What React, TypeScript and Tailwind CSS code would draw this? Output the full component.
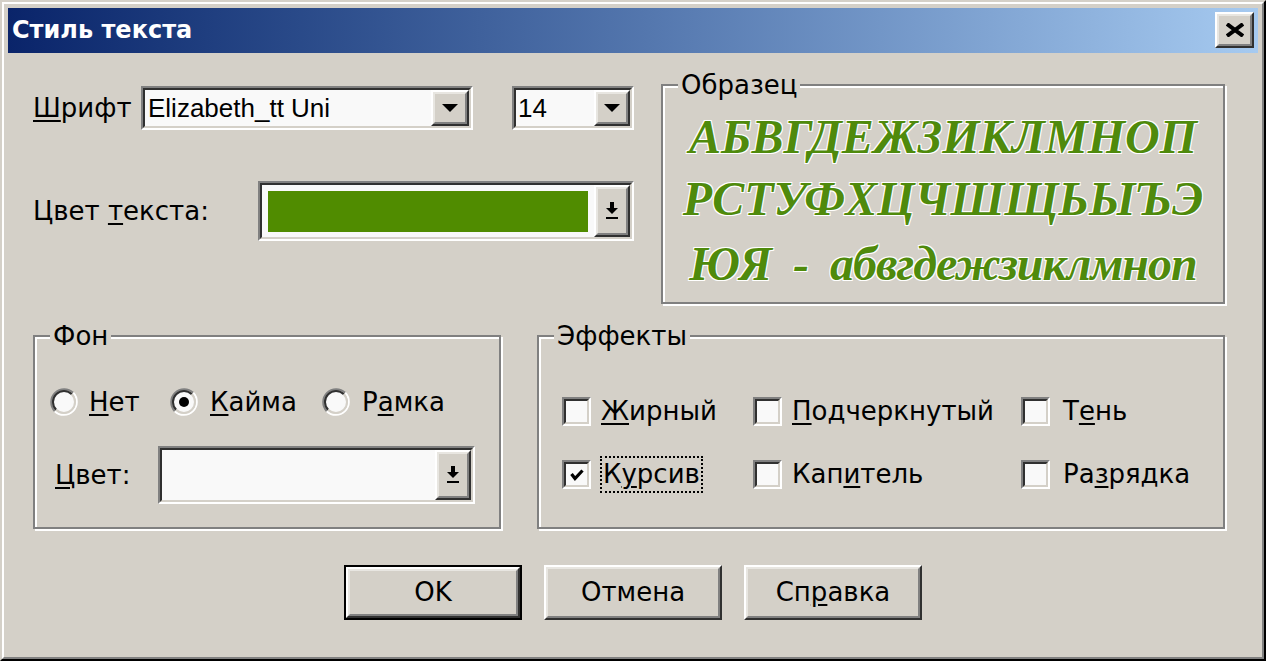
import type { ReactNode } from "react";

const sampleFont = "font-['Liberation_Serif',serif]";

function Key({ children }: { children: ReactNode }) {
  return <span className="underline decoration-2 underline-offset-[3px]">{children}</span>;
}

function Raised({ className = "", children }: { className?: string; children?: ReactNode }) {
  return (
    <div className={`border-2 border-t-white border-l-white border-r-[#303030] border-b-[#303030] ${className}`}>
      <div className="h-full w-full border-2 border-t-[#e8e6e1] border-l-[#e8e6e1] border-r-[#808080] border-b-[#808080] bg-[#d4d0c8] flex items-center justify-center">
        {children}
      </div>
    </div>
  );
}

function Sunken({ className = "", inner = "", children }: { className?: string; inner?: string; children?: ReactNode }) {
  return (
    <div className={`border-2 border-t-[#808080] border-l-[#808080] border-r-white border-b-white ${className}`}>
      <div className={`h-full w-full border-2 border-t-[#303030] border-l-[#303030] border-r-[#d4d0c8] border-b-[#d4d0c8] flex ${inner}`}>
        {children}
      </div>
    </div>
  );
}

function Group({ title, className = "", children }: { title: string; className?: string; children?: ReactNode }) {
  return (
    <fieldset className={`border-2 border-[#808080] shadow-[2px_2px_0_#fff,inset_2px_2px_0_#fff] ${className}`}>
      <legend className="ml-[15px] px-[3px] bg-[#d4d0c8] leading-[26px]">{title}</legend>
      {children}
    </fieldset>
  );
}

const Triangle = () => (
  <svg width="16" height="8" viewBox="0 0 16 8">
    <polygon points="0,0 16,0 8,8" fill="#000" />
  </svg>
);

const DownBar = () => (
  <svg width="12" height="18" viewBox="0 0 12 18">
    <rect x="4" y="0" width="4" height="6" fill="#000" />
    <polygon points="0,6 12,6 6,12" fill="#000" />
    <rect x="0" y="15" width="12" height="2" fill="#000" />
  </svg>
);

function Radio({ on = false }: { on?: boolean }) {
  return (
    <svg width="28" height="28" viewBox="0 0 28 28" className="shrink-0">
      <circle cx="14" cy="14" r="11" fill="#f9f9f9" />
      <path d="M4.81 23.19 A13 13 0 0 1 23.19 4.81" fill="none" stroke="#808080" strokeWidth="2" />
      <path d="M23.19 4.81 A13 13 0 0 1 4.81 23.19" fill="none" stroke="#fff" strokeWidth="2" />
      <path d="M6.22 21.78 A11 11 0 0 1 21.78 6.22" fill="none" stroke="#303030" strokeWidth="2" />
      <path d="M21.78 6.22 A11 11 0 0 1 6.22 21.78" fill="none" stroke="#d4d0c8" strokeWidth="2" />
      {on && <circle cx="14" cy="14" r="5" fill="#000" />}
    </svg>
  );
}

function Check({ on = false }: { on?: boolean }) {
  return (
    <Sunken className="w-[29px] h-[29px] shrink-0" inner="bg-[#f9f9f9] items-center justify-center">
      {on && (
        <svg width="14" height="12" viewBox="0 0 14 12">
          <polyline points="1.5,5 5,9.5 12.5,1.5" fill="none" stroke="#000" strokeWidth="3.2" />
        </svg>
      )}
    </Sunken>
  );
}

function Btn({ children, def = false }: { children: ReactNode; def?: boolean }) {
  if (def) {
    return (
      <div className="w-[178px] h-[55px] border-2 border-black">
        <Raised className="w-full h-full">{children}</Raised>
      </div>
    );
  }
  return <Raised className="w-[178px] h-[55px]">{children}</Raised>;
}

export default function App() {
  return (
    <div className="w-[1266px] h-[661px] border-2 border-t-[#d4d0c8] border-l-[#d4d0c8] border-r-black border-b-black font-['DejaVu_Sans',sans-serif] text-[26px] text-black">
      <div className="h-full border-2 border-t-white border-l-white border-r-[#808080] border-b-[#808080] bg-[#d4d0c8] p-[4px]">
        {/* title bar */}
        <div className="h-[45px] flex items-start justify-between bg-linear-to-r from-[#0a246a] to-[#a6caf0]">
          <span className="pl-[4px] text-white font-bold text-[24px] leading-[45px]">Стиль текста</span>
          <Raised className="mt-[4px] mr-[4px] w-[39px] h-[36px]">
            <svg width="18" height="14" viewBox="0 0 18 14">
              <path d="M1 1 L17 13 M17 1 L1 13" stroke="#000" strokeWidth="4" />
            </svg>
          </Raised>
        </div>

        <div className="pt-[19px] pl-[25px]">
          <div className="flex">
            <div className="w-[601px]">
              <div className="mt-[14px] flex items-center h-[44px]">
                <span className="w-[108px]">
                  <Key>Ш</Key>рифт
                </span>
                <Sunken className="w-[332px] h-[44px]" inner="bg-[#f9f9f9] items-stretch">
                  <span className="flex-1 pl-[3px] leading-[36px] font-['Liberation_Sans',sans-serif]">
                    Elizabeth_tt Uni
                  </span>
                  <Raised className="w-[38px] h-full">
                    <Triangle />
                  </Raised>
                </Sunken>
                <Sunken className="ml-[39px] w-[122px] h-[44px]" inner="bg-[#f9f9f9] items-stretch">
                  <span className="flex-1 pl-[2px] leading-[36px] font-['Liberation_Sans',sans-serif]">14</span>
                  <Raised className="w-[36px] h-full">
                    <Triangle />
                  </Raised>
                </Sunken>
              </div>
              <div className="mt-[51px] flex items-center h-[60px]">
                <span className="w-[225px]">
                  Цвет <Key>т</Key>екста:
                </span>
                <Sunken className="w-[376px] h-[60px]" inner="bg-[#f9f9f9] items-stretch">
                  <div className="flex-1 pt-[6px] pb-[5px] pl-[6px] pr-[6px]">
                    <div className="h-full bg-[#508c00]" />
                  </div>
                  <Raised className="w-[36px] h-full">
                    <DownBar />
                  </Raised>
                </Sunken>
              </div>
            </div>

            <Group title="Образец" className="ml-[27px] w-[564px] h-[232px]">
              <div
                className={`pt-[8px] text-center text-[48px] leading-[62px] font-bold italic text-[#4f8a0c] whitespace-pre ${sampleFont} [text-shadow:1px_1px_0_#fff,-1px_-1px_0_#fff,1px_-1px_0_#fff,-1px_1px_0_#fff]`}
              >
                <div>АБВГДЕЖЗИКЛМНОП</div>
                <div>РСТУФХЦЧШЩЬЫЪЭ</div>
                <div className="tracking-[-1px] pt-[3px]">ЮЯ  -  абвгдежзиклмноп</div>
              </div>
            </Group>
          </div>

          <div className="mt-[19px] flex">
            <Group title="Фон" className="w-[468px] h-[206px]">
              <div className="mt-[39px] pl-[15px] flex items-center h-[28px]">
                <Radio />
                <span className="ml-[11px] w-[81px]">
                  <Key>Н</Key>ет
                </span>
                <Radio on />
                <span className="ml-[12px] w-[112px]">
                  <Key>К</Key>айма
                </span>
                <Radio />
                <span className="ml-[12px]">
                  Р<Key>а</Key>мка
                </span>
              </div>
              <div className="mt-[30px] pl-[20px] flex items-center">
                <span className="w-[103px]">
                  <Key>Ц</Key>вет:
                </span>
                <Sunken className="w-[317px] h-[58px]" inner="bg-[#f9f9f9] items-stretch">
                  <div className="flex-1" />
                  <Raised className="w-[36px] h-full">
                    <DownBar />
                  </Raised>
                </Sunken>
              </div>
            </Group>

            <Group title="Эффекты" className="ml-[36px] w-[688px] h-[206px]">
              <div className="mt-[44px] pl-[23px] grid grid-cols-[191px_268px_1fr] auto-rows-[37px] gap-y-[26px]">
                <div className="flex items-center">
                  <Check />
                  <span className="ml-[10px]">
                    <Key>Ж</Key>ирный
                  </span>
                </div>
                <div className="flex items-center">
                  <Check />
                  <span className="ml-[10px]">
                    <Key>П</Key>одчеркнутый
                  </span>
                </div>
                <div className="flex items-center">
                  <Check />
                  <span className="ml-[13px]">
                    Т<Key>е</Key>нь
                  </span>
                </div>
                <div className="flex items-center">
                  <Check on />
                  <span className="ml-[9px] px-[1px] border-2 border-dotted border-black leading-[33px]">
                    К<Key>у</Key>рсив
                  </span>
                </div>
                <div className="flex items-center">
                  <Check />
                  <span className="ml-[10px]">
                    Кап<Key>и</Key>тель
                  </span>
                </div>
                <div className="flex items-center">
                  <Check />
                  <span className="ml-[13px]">
                    Ра<Key>з</Key>рядка
                  </span>
                </div>
              </div>
            </Group>
          </div>

          <div className="mt-[36px] pr-[25px] flex justify-center gap-[22px]">
            <Btn def>OK</Btn>
            <Btn>Отмена</Btn>
            <Btn>
              <span>
                Сп<Key>р</Key>авка
              </span>
            </Btn>
          </div>
        </div>
      </div>
    </div>
  );
}
